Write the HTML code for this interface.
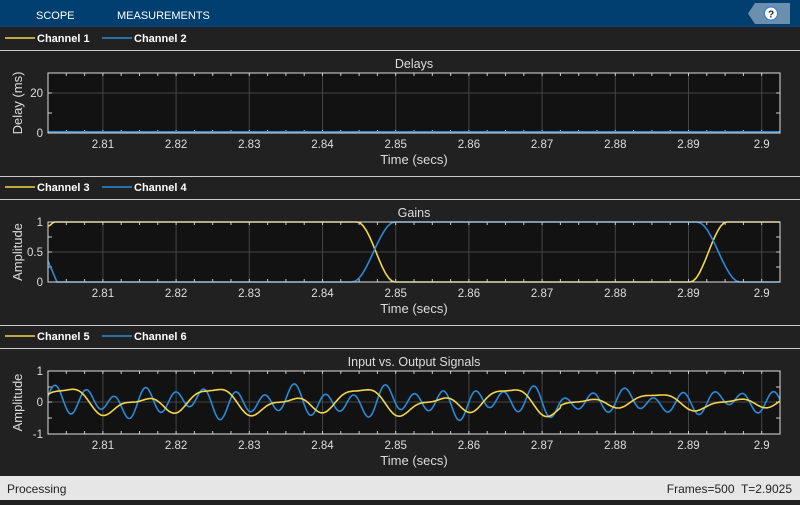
<!DOCTYPE html>
<html><head><meta charset="utf-8"><style>
body{margin:0;width:800px;height:500px;overflow:hidden;background:#212121;font-family:"Liberation Sans",sans-serif}
</style></head><body>
<svg id="s" width="800" height="500" xmlns="http://www.w3.org/2000/svg" font-family="Liberation Sans, sans-serif">
<rect x="0" y="0" width="800" height="500" fill="#212121"/>
<rect x="0" y="0" width="800" height="27" fill="#003f70"/>
<text x="36" y="19" fill="#fff" font-size="11">SCOPE</text>
<text x="117" y="19" fill="#fff" font-size="11">MEASUREMENTS</text>
<polygon points="755,3 790,3 790,24 755,24 748,13.5" fill="#6d8fae"/>
<circle cx="771" cy="13.5" r="6.5" fill="#fff" stroke="#2a7be0" stroke-width="1"/>
<text x="771" y="17.5" fill="#222" font-size="10" font-weight="bold" text-anchor="middle">?</text>
<rect x="0" y="476" width="800" height="24" fill="#e6e6e6"/>
<text x="7" y="493" fill="#222" font-size="12">Processing</text>
<text x="792" y="493" fill="#222" font-size="12" text-anchor="end" xml:space="preserve">Frames=500  T=2.9025</text>
<g id="g"></g>
</svg>
<script>
var g=document.getElementById('g'),h='';
var X=function(t){return 48+(t-2.8025)*7320;};
var Y=['#f2d64b','#2a8ad8'];
function legend(y,a,b){
 h+='<line x1="5" x2="35" y1="'+y+'" y2="'+y+'" stroke="'+Y[0]+'" stroke-width="1.5"/><text x="37" y="'+(y+4)+'" fill="#fff" font-size="11" font-weight="bold">Channel '+a+'</text>';
 h+='<line x1="102" x2="132" y1="'+y+'" y2="'+y+'" stroke="'+Y[1]+'" stroke-width="1.5"/><text x="134" y="'+(y+4)+'" fill="#fff" font-size="11" font-weight="bold">Channel '+b+'</text>';
}
function panel(top,bot,title,ylab,ticks,pathsFn){
 h+='<text x="414" y="'+(top-5)+'" fill="#ddd" font-size="12.5" text-anchor="middle">'+title+'</text>';
 h+='<rect x="48" y="'+top+'" width="732" height="'+(bot-top)+'" fill="#121212"/>';
 for(var i=1;i<=10;i++){var t=2.80+i*0.01,x=X(t);
  h+='<line x1="'+x+'" x2="'+x+'" y1="'+top+'" y2="'+bot+'" stroke="#444"/>';
  h+='<text x="'+x+'" y="'+(bot+15)+'" fill="#ddd" font-size="11.5" text-anchor="middle">'+(i==10?'2.9':t.toFixed(2))+'</text>';}
 for(var k=0;k<=40;k++){var x=X(2.8025+k*0.0025);h+='<line x1="'+x+'" x2="'+x+'" y1="'+top+'" y2="'+(top+3)+'" stroke="#ccc"/><line x1="'+x+'" x2="'+x+'" y1="'+bot+'" y2="'+(bot-3)+'" stroke="#ccc"/>';}
 ticks.forEach(function(tk){ if(tk[2])h+='<line x1="48" x2="780" y1="'+tk[0]+'" y2="'+tk[0]+'" stroke="#444"/>';
  h+='<line x1="48" x2="52" y1="'+tk[0]+'" y2="'+tk[0]+'" stroke="#ccc"/><line x1="780" x2="776" y1="'+tk[0]+'" y2="'+tk[0]+'" stroke="#ccc"/>';
  if(tk[1]!=='')h+='<text x="43" y="'+(tk[0]+4)+'" fill="#ddd" font-size="11.5" text-anchor="end">'+tk[1]+'</text>';});
 h+=pathsFn();
 h+='<rect x="48" y="'+top+'" width="732" height="'+(bot-top)+'" fill="none" stroke="#ddd"/>';
 var my=(top+bot)/2;
 h+='<text transform="translate(22,'+my+') rotate(-90)" fill="#ddd" font-size="13" text-anchor="middle">'+ylab+'</text>';
 h+='<text x="414" y="'+(bot+31)+'" fill="#ddd" font-size="13" text-anchor="middle">Time (secs)</text>';
}
h+='<line x1="0" x2="800" y1="50.5" y2="50.5" stroke="#ccc"/>';
h+='<line x1="0" x2="800" y1="176.5" y2="176.5" stroke="#ccc"/><line x1="0" x2="800" y1="199.5" y2="199.5" stroke="#ccc"/>';
h+='<line x1="0" x2="800" y1="325.5" y2="325.5" stroke="#ccc"/><line x1="0" x2="800" y1="348.5" y2="348.5" stroke="#ccc"/>';
legend(38,1,2);legend(187,3,4);legend(336,5,6);
panel(73,133,'Delays','Delay (ms)',[[93,'20',1],[113,'',0],[133,'0',0]],function(){
 return '<line x1="48" x2="780" y1="132" y2="132" stroke="'+Y[1]+'" stroke-width="2"/>';});
function ramp(x0,x1,y0,y1){var s='';for(var i=0;i<=12;i++){var u=i/12,v=(1-Math.cos(Math.PI*u))/2;s+=' L'+(x0+(x1-x0)*u).toFixed(1)+','+(y0+(y1-y0)*v).toFixed(1);}return s;}
panel(222,282,'Gains','Amplitude',[[222,'1',0],[237,'',0],[252,'0.5',1],[267,'',0],[282,'0',0]],function(){
 var yl='M48,226'+ramp(48,55,226,222)+' L357,222'+ramp(357,395,222,282)+' L690,282'+ramp(690,727,282,222)+' L780,222';
 var bl='M48,261 L57,282 L352,282'+ramp(352,395,282,222)+' L697,222'+ramp(697,740,222,282)+' L780,282';
 return '<path d="'+yl+'" fill="none" stroke="'+Y[0]+'" stroke-width="1.6"/><path d="'+bl+'" fill="none" stroke="'+Y[1]+'" stroke-width="1.6"/>';});
panel(371,434,'Input vs. Output Signals','Amplitude',[[371,'1',0],[387,'',0],[402,'0',1],[418,'',0],[434,'-1',0]],function(){
 var a='',b='';for(var x=48;x<=780;x+=1){var t=x-48;
  var ya=0.3*Math.sin(t*0.085)+0.18*Math.sin(t*0.043+1)+0.1*Math.sin(t*0.17+2);
  var yb=0.35*Math.sin(t*0.21)+0.15*Math.sin(t*0.13+1.3)+0.1*Math.sin(t*0.057+0.4);
  if(x>560){ya*=0.6;yb*=0.8;}
  a+=(x==48?'M':' L')+x+','+(402-ya*31).toFixed(1);b+=(x==48?'M':' L')+x+','+(402-yb*31).toFixed(1);}
 return '<path d="'+b+'" fill="none" stroke="'+Y[1]+'" stroke-width="1.6"/><path d="'+a+'" fill="none" stroke="'+Y[0]+'" stroke-width="1.6"/>';});
g.innerHTML=h;
</script>
</body></html>
